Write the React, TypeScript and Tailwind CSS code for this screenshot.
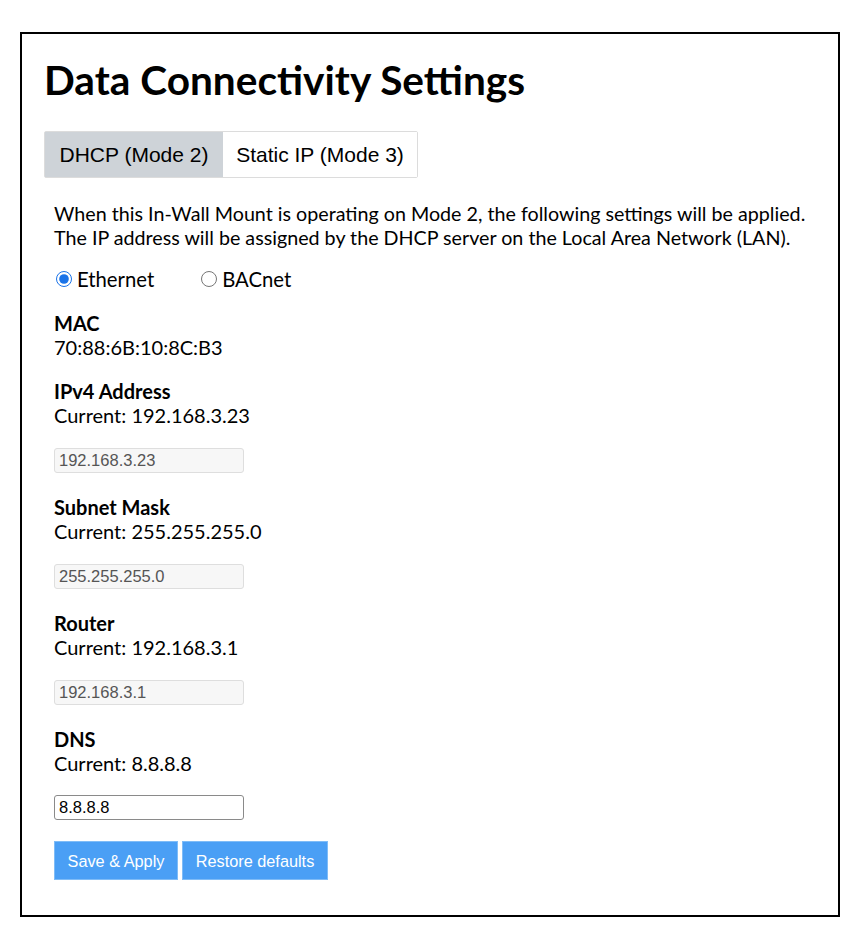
import { useState } from "react";

const fields = [
  { label: "IPv4 Address", current: "192.168.3.23", editable: false },
  { label: "Subnet Mask", current: "255.255.255.0", editable: false },
  { label: "Router", current: "192.168.3.1", editable: false },
  { label: "DNS", current: "8.8.8.8", editable: true },
];

export default function App() {
  const [mode, setMode] = useState<"dhcp" | "static">("dhcp");
  const [iface, setIface] = useState("ethernet");
  const [dns, setDns] = useState("8.8.8.8");

  return (
    <div className="bg-white min-h-[942px] pt-[32px] pl-[20px]">
      <div className="w-[820px] h-[885px] border-2 border-black px-[22px] text-black font-['Lato',sans-serif]">
        <h1 className="mt-[22px] text-[40.6px] leading-[48px] font-bold">Data Connectivity Settings</h1>

        <div className="mt-[27px] inline-flex border border-[#dcdcdc] rounded-[2px] font-['Liberation_Sans',Arial,sans-serif] text-[21px]">
          <button
            onClick={() => setMode("dhcp")}
            className={`h-[45px] w-[178px] ${mode === "dhcp" ? "bg-[#ced3d8]" : "bg-white"}`}
          >
            DHCP (Mode 2)
          </button>
          <button
            onClick={() => setMode("static")}
            className={`h-[45px] w-[194px] ${mode === "static" ? "bg-[#ced3d8]" : "bg-white"}`}
          >
            Static IP (Mode 3)
          </button>
        </div>

        <div className="pl-[10px] text-[20px] leading-[24px]">
          <p className="mt-[24px] text-[19.7px]">
            When this In-Wall Mount is operating on Mode 2, the following settings will be applied.
            <br />
            The IP address will be assigned by the DHCP server on the Local Area Network (LAN).
          </p>

          <div className="mt-[17px] flex items-center h-[24px] text-[20.3px]">
            <label className="flex items-center">
              <input
                type="radio"
                name="iface"
                checked={iface === "ethernet"}
                onChange={() => setIface("ethernet")}
                className="w-[16px] h-[16px] ml-[2px] mr-[5px] my-0 accent-[#1a73e8]"
              />
              Ethernet
            </label>
            <label className="flex items-center ml-[47px]">
              <input
                type="radio"
                name="iface"
                checked={iface === "bacnet"}
                onChange={() => setIface("bacnet")}
                className="w-[16px] h-[16px] mr-[5px] my-0 accent-[#1a73e8]"
              />
              BACnet
            </label>
          </div>

          <div className="mt-[20px]">
            <div className="font-bold">MAC</div>
            <div>70:88:6B:10:8C:B3</div>
          </div>

          {fields.map((f) => (
            <div key={f.label} className={`mt-[20px] ${f.editable ? "" : "pb-[2px]"}`}>
              <div className="font-bold">{f.label}</div>
              <div>Current: {f.current}</div>
              <input
                type="text"
                disabled={!f.editable}
                value={f.editable ? dns : f.current}
                onChange={(e) => setDns(e.target.value)}
                className={`block w-[190px] h-[25px] px-[4px] rounded-[3px] text-[16.5px] font-['Liberation_Sans',Arial,sans-serif] outline-none ${
                  f.editable
                    ? "mt-[20px] bg-white border border-[#8a8a8a] text-black"
                    : "mt-[21px] bg-[#f7f7f7] border border-[#dedede] text-[#555]"
                }`}
              />
            </div>
          ))}

          <div className="mt-[21px] flex gap-[4px] font-['Liberation_Sans',Arial,sans-serif] text-[16.3px] text-white">
            <button className="h-[39px] w-[124px] bg-[#4a9ff5] border border-[#7fbcf7]">Save &amp; Apply</button>
            <button className="h-[39px] w-[146px] bg-[#4a9ff5] border border-[#7fbcf7]">Restore defaults</button>
          </div>
        </div>
      </div>
    </div>
  );
}
